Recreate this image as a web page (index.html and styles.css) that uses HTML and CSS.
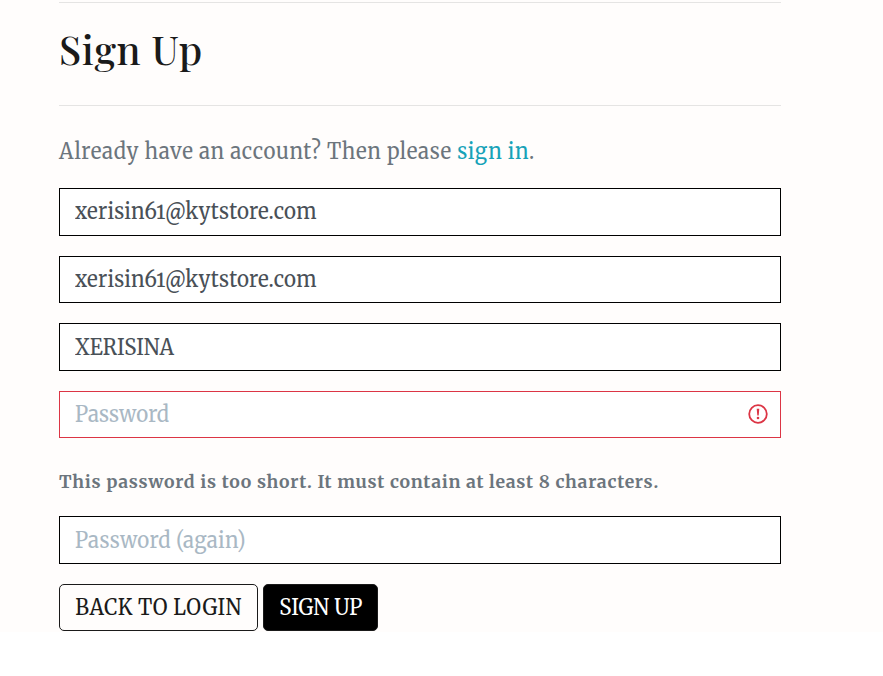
FILE: index.html
```html
<!DOCTYPE html>
<html lang="en">
<head>
<meta charset="utf-8">
<title>Sign Up</title>
<link rel="stylesheet" href="styles.css">
</head>
<body>
<main class="page">
  <hr class="rule">
  <h1 class="title">Sign Up</h1>
  <hr class="rule">
  <p class="intro"><span class="narrow">Already have an account? Then please <a class="link" href="#">sign in</a>.</span></p>
  <form class="form">
    <div class="field"><span class="narrow">xerisin61@kytstore.com</span></div>
    <div class="field"><span class="narrow">xerisin61@kytstore.com</span></div>
    <div class="field user"><span class="narrow">XERISINA</span></div>
    <div class="field invalid"><span class="narrow">Password</span>
      <svg class="alert" viewBox="0 0 20 20" width="20" height="20"><circle cx="10" cy="10" r="8.8" fill="none" stroke="#dc3545" stroke-width="1.8"/><path d="M8.7 4.8h2.6l-.6 6.6H9.3z" fill="#dc3545"/><circle cx="10" cy="14" r="1.3" fill="#dc3545"/></svg>
    </div>
    <p class="error">This password is too short. It must contain at least 8 characters.</p>
    <div class="field again"><span class="narrow">Password (again)</span></div>
    <div class="actions">
      <button type="button" class="btn back"><span class="narrow">BACK TO LOGIN</span></button>
      <button type="button" class="btn signup"><span class="narrow">SIGN UP</span></button>
    </div>
  </form>
</main>
</body>
</html>
```
FILE: styles.css
```css
* { box-sizing: border-box; }
body { margin: 0; background: #fff; color: #6c757d; font-family: Merriweather, "Noto Serif", "DejaVu Serif", serif; font-size: 22px; font-variant-numeric: oldstyle-nums; }
.page { height: 632px; padding: 2px 102px 0 59px; background: #fffdfc; }
.rule { margin: 0; border: 0; border-top: 1px solid #e5e4e3; }
.title { margin: 0; height: 102px; padding-top: 18px; color: #1a1a1a; font: 500 40px/56px "Playfair Display", "Liberation Serif", serif; letter-spacing: .6px; }
.narrow { display: inline-block; transform: scaleX(.93); transform-origin: left center; }
.intro { margin: 0; height: 82px; padding-top: 28px; line-height: 34px; white-space: nowrap; letter-spacing: .68px; }
.link { color: #17a2b8; text-decoration: none; }
.field { display: flex; align-items: center; justify-content: space-between; height: 47.5px; margin-bottom: 20.1px; padding: 0 12.5px .6px 15px; border: 1px solid #000; background: #fff; color: #495057; letter-spacing: .22px; }
.user { letter-spacing: 0; }
.invalid { border-color: #dc3545; color: #a9b8c4; letter-spacing: .05px; }
.error { margin: 0; height: 58px; font-size: 17.6px; font-weight: 700; line-height: 48px; white-space: nowrap; letter-spacing: .73px; }
.again { color: #a9b8c4; letter-spacing: .27px; }
.actions { display: flex; gap: 5px; }
.btn { height: 47px; padding: 0 0 1px; border: 1px solid #1a1a1a; border-radius: 5px; font: inherit; background: transparent; color: #1a1a1a; white-space: nowrap; }
.btn .narrow { transform-origin: center; }
.back { width: 199px; letter-spacing: .45px; }
.signup { width: 115px; background: #000; color: #fff; letter-spacing: .1px; }
```
